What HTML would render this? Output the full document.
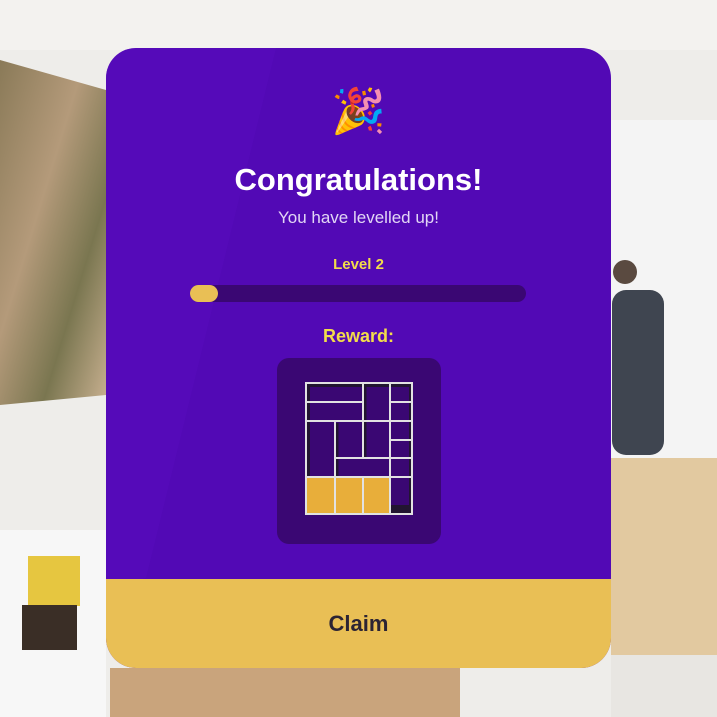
<!DOCTYPE html>
<html><head><style>
body{margin:0;width:717px;height:717px;overflow:hidden;position:relative;font-family:"Liberation Sans",sans-serif;background:#ecebe8}
.bg{position:absolute;inset:0}
.card{position:absolute;left:106px;top:48px;width:505px;height:620px;border-radius:30px;background:#5209b5;overflow:hidden}
.foot{position:absolute;left:0;bottom:0;width:100%;height:89px;background:#e9bf55;text-align:center;line-height:89px;font-size:22px;font-weight:bold;color:#2c2433}
.t{position:absolute;width:100%;text-align:center}
</style></head><body>
<svg class="bg" width="717" height="717">
<rect width="717" height="717" fill="#eeedea"/>
<rect x="0" y="0" width="717" height="50" fill="#f3f2ef"/>
<rect x="611" y="120" width="106" height="340" fill="#f4f4f4"/>
<defs><linearGradient id="p" x1="0" y1="0" x2="1" y2="1"><stop offset="0" stop-color="#8a7a58"/><stop offset=".4" stop-color="#b49a7a"/><stop offset=".7" stop-color="#7a7650"/><stop offset="1" stop-color="#c8b090"/></linearGradient></defs>
<polygon points="0,60 106,90 106,395 0,405" fill="url(#p)"/>
<rect x="0" y="530" width="106" height="187" fill="#f7f7f7"/>
<rect x="28" y="556" width="52" height="50" fill="#e6c640"/>
<rect x="22" y="605" width="55" height="45" fill="#3a2e26"/>
<rect x="611" y="458" width="106" height="200" fill="#e2c9a0"/>
<rect x="611" y="655" width="106" height="62" fill="#e8e6e2"/>
<rect x="110" y="668" width="350" height="49" fill="#c9a47c"/>
<rect x="612" y="290" width="52" height="165" fill="#3f4550" rx="14"/>
<circle cx="625" cy="272" r="12" fill="#5a4a40"/>
</svg>
<div class="card">
<svg style="position:absolute;left:0;top:0" width="505" height="620"><polygon points="0,0 170,0 40,530 0,540" fill="#580cbd" opacity=".6"/></svg>
<div class="t" style="top:36px;font-size:44px;line-height:56px">🎉</div>
<div class="t" style="top:114px;font-size:31px;font-weight:bold;color:#fff">Congratulations!</div>
<div class="t" style="top:160px;font-size:17px;color:#e2d6f5">You have levelled up!</div>
<div class="t" style="top:208px;font-size:15px;font-weight:bold;color:#f3dd4a">Level 2</div>
<div style="position:absolute;left:84px;top:237px;width:336px;height:17px;border-radius:9px;background:#3a0773"><div style="width:28px;height:17px;border-radius:9px;background:#e9bf55"></div></div>
<div class="t" style="top:278px;font-size:18px;font-weight:bold;color:#f3dd4a">Reward:</div>
<div style="position:absolute;left:171px;top:310px;width:164px;height:186px;border-radius:12px;background:#3a0773"></div>
<svg style="position:absolute;left:0;top:0" width="505" height="620" viewBox="106 48 505 620">
<g fill="none" stroke="#221530" stroke-width="3">
<rect x="308.5" y="385.5" width="102" height="127"/>
<line x1="337" y1="423" x2="337" y2="477"/><line x1="365" y1="385" x2="365" y2="458"/></g>
<rect x="307" y="477" width="83" height="37" fill="#e8ae3a"/>
<rect x="391" y="505" width="20" height="8" fill="#221530"/>
<g fill="none" stroke="#e2e2e2" stroke-width="2">
<rect x="306" y="383" width="106" height="131"/>
<line x1="306" y1="402" x2="363" y2="402"/><line x1="306" y1="421" x2="412" y2="421"/>
<line x1="363" y1="383" x2="363" y2="458"/><line x1="390" y1="383" x2="390" y2="514"/>
<line x1="335" y1="421" x2="335" y2="514"/><line x1="335" y1="458" x2="390" y2="458"/>
<line x1="390" y1="402" x2="412" y2="402"/><line x1="390" y1="440" x2="412" y2="440"/><line x1="390" y1="458" x2="412" y2="458"/>
<line x1="306" y1="477" x2="412" y2="477"/><line x1="363" y1="477" x2="363" y2="514"/>
</g>
</svg>
<div class="foot">Claim</div>
</div>
</body></html>
